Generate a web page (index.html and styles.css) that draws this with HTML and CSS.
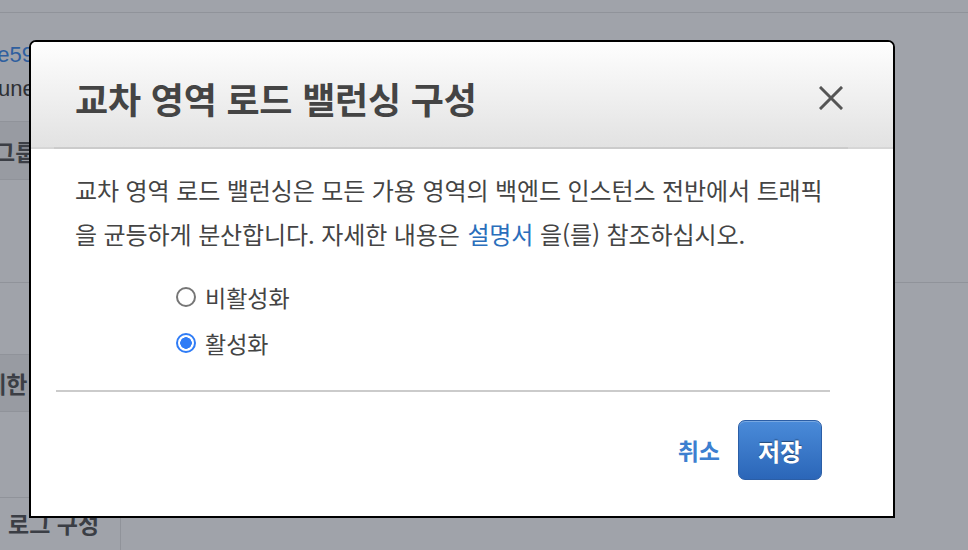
FILE: index.html
```html
<!DOCTYPE html>
<html lang="ko">
<head>
    <meta charset="UTF-8">
    <meta name="viewport" content="width=device-width, initial-scale=1.0">
    <title>교차 영역 로드 밸런싱 구성</title>
    <link rel="stylesheet" href="styles.css">
</head>
<body>
    <div class="page">
        <div class="page-top"></div>
        <div class="page-row row-id">
            <a class="id-link">0e59f3c1a7d2</a>
            <span class="id-name">une-balancer-01</span>
        </div>
        <div class="page-row row-group row-dark"><span class="cut-group">그룹 설정</span></div>
        <div class="page-gap gap-a"></div>
        <div class="page-gap gap-b"></div>
        <div class="page-row row-limit row-dark"><span class="cut-limit">제한 설정</span></div>
        <div class="page-gap gap-c"></div>
        <div class="page-row row-log">
            <div class="log-cell">로그 구성</div>
        </div>
    </div>

    <div class="modal">
        <div class="modal-header">
            <div class="modal-title-row">
                <h2 class="modal-title">교차 영역 로드 밸런싱 구성</h2>
                <button class="btn-close" title="닫기">
                    <svg viewBox="0 0 24 24" fill="none" stroke="currentColor" stroke-width="3" stroke-linecap="square">
                        <path d="M2 2L22 22M22 2L2 22"/>
                    </svg>
                </button>
            </div>
        </div>
        <div class="modal-body">
            <p class="desc">교차 영역 로드 밸런싱은 모든 가용 영역의 백엔드 인스턴스 전반에서 트래픽을 균등하게 분산합니다. 자세한 내용은 <a class="doc-link">설명서</a> 을(를) 참조하십시오.</p>
            <div class="radio-group">
                <label class="radio"><span class="radio-dot"></span>비활성화</label>
                <label class="radio is-checked"><span class="radio-dot"></span>활성화</label>
            </div>
        </div>
        <div class="modal-divider"></div>
        <div class="modal-footer">
            <a class="btn-cancel">취소</a>
            <button class="btn-save">저장</button>
        </div>
    </div>
</body>
</html>
```

FILE: styles.css
```css
html, body {
    margin: 0;
    padding: 0;
}
body {
    width: 968px;
    height: 550px;
    overflow: hidden;
    position: relative;
    background-color: #a0a3aa;
    font-family: "Noto Sans CJK KR", "Noto Sans", sans-serif;
    color: #444;
}

/* dimmed page behind the dialog */
.page {
    display: flex;
    flex-direction: column;
    width: 968px;
}
.page-top {
    height: 12px;
    border-bottom: 1px solid #90939a;
}
.page-row, .page-gap {
    width: 700px;
    overflow: hidden;
    white-space: nowrap;
}
.row-id {
    height: 108px;
    display: flex;
    flex-direction: column;
    border-bottom: 1px solid #90939a;
    font-family: "Liberation Sans", sans-serif;
}
.id-link {
    margin: 27px 0 0 -15px;
    font-size: 22px;
    line-height: 30px;
    color: #2f5f9f;
}
.id-name {
    margin: 4px 0 0 -2px;
    font-size: 22px;
    line-height: 30px;
    color: #2e3035;
}
.row-dark {
    background-color: #989ba2;
    display: flex;
    align-items: center;
    font-weight: bold;
    font-size: 23px;
    color: #3b3e45;
}
.row-group {
    height: 57px;
    border-bottom: 1px solid #90939a;
}
.cut-group {
    margin-left: -6px;
}
.gap-a {
    height: 102px;
    width: 968px;
    border-bottom: 1px solid #90939a;
}
.gap-b {
    height: 71px;
    border-bottom: 1px solid #90939a;
}
.row-limit {
    height: 56px;
    border-bottom: 1px solid #90939a;
}
.cut-limit {
    margin-left: -15px;
}
.gap-c {
    height: 85px;
    border-bottom: 1px solid #90939a;
}
.row-log {
    height: 52px;
    display: flex;
}
.log-cell {
    width: 112px;
    padding-left: 8px;
    border-right: 1px solid #90939a;
    font-weight: bold;
    font-size: 23px;
    line-height: 50px;
    color: #3b3e45;
}

/* dialog */
.modal {
    position: absolute;
    left: 29px;
    top: 40px;
    width: 866px;
    height: 478px;
    box-sizing: border-box;
    border: 2px solid #000;
    border-radius: 7px 7px 0 0;
    background-color: #fff;
    display: flex;
    flex-direction: column;
}
.modal-header {
    height: 105px;
    flex: none;
    padding: 0 45px 0 23px;
    border-bottom: 2px solid #d6d6d6;
    border-radius: 5px 5px 0 0;
    background: linear-gradient(#fefefe, #e2e2e2);
}
.modal-title-row {
    height: 107px;
    box-sizing: border-box;
    padding: 6px 0 0 21px;
    display: flex;
    align-items: center;
    justify-content: space-between;
    border-bottom: 2px solid #cbcbcb;
}
.modal-title {
    margin: 0;
    font-size: 36px;
    font-weight: bold;
    letter-spacing: -0.2px;
    color: #444;
}
.btn-close {
    border: none;
    background: none;
    padding: 0;
    margin-right: 5px;
    width: 24px;
    height: 24px;
    color: #555;
    cursor: pointer;
}
.btn-close svg {
    width: 24px;
    height: 24px;
    display: block;
}
.modal-body {
    padding: 19px 58px 0 44px;
}
.desc {
    margin: 0;
    font-size: 24px;
    line-height: 44px;
    letter-spacing: -0.1px;
    color: #444;
}
.doc-link {
    margin-left: 1px;
    color: #2a6ebb;
    cursor: pointer;
}
.radio-group {
    margin: 18px 0 0 101px;
    display: flex;
    flex-direction: column;
}
.radio {
    height: 46px;
    display: flex;
    align-items: center;
    gap: 9px;
    font-size: 23px;
    color: #444;
    cursor: pointer;
}
.radio-dot {
    width: 20px;
    height: 20px;
    box-sizing: border-box;
    border: 2px solid #767676;
    border-radius: 50%;
    background-color: #fff;
}
.is-checked .radio-dot {
    border-color: #2f7cf6;
    background: radial-gradient(circle, #2f7cf6 0 5.5px, #fff 6px);
}
.modal-divider {
    margin: 24px 63px 0 25px;
    height: 2px;
    background-color: #cbcbcb;
}
.modal-footer {
    display: flex;
    justify-content: flex-end;
    align-items: center;
    gap: 18px;
    padding: 28px 71px 0 0;
}
.btn-cancel {
    font-size: 23px;
    font-weight: bold;
    color: #3d7fd0;
    cursor: pointer;
}
.btn-save {
    width: 84px;
    height: 60px;
    border: 1px solid #2b5ea6;
    border-radius: 7px;
    background: linear-gradient(#4a8bd9, #2b66b8);
    box-shadow: inset 0 1px 0 rgba(255, 255, 255, 0.25);
    font-family: "Noto Sans CJK KR", "Noto Sans", sans-serif;
    font-size: 24px;
    font-weight: bold;
    color: #fff;
    text-shadow: 0 -1px 1px rgba(0, 0, 0, 0.4);
    cursor: pointer;
}
```
